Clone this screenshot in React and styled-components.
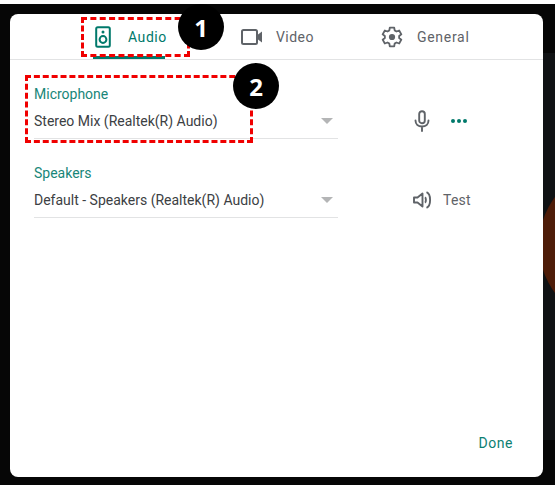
import React from "react";
import styled, { createGlobalStyle } from "styled-components";

const Global = createGlobalStyle`
  html, body { margin: 0; padding: 0; background: #fff; }
  body { font-family: Roboto, "Liberation Sans", sans-serif; }
`;

const Page = styled.div`
  position: relative;
  width: 555px;
  height: 481px;
  margin-top: 4px;
  background: #060606;
  overflow: hidden;
  padding: 10px 12px 8px 10px;
  box-sizing: border-box;
`;

const Backdrop = styled.div`
  position: absolute;
  left: 540px;
  top: 49px;
  width: 15px;
  height: 387px;
  background: #101214;
`;

const Glow = styled.div`
  position: absolute;
  left: 539px;
  top: 161px;
  width: 160px;
  height: 160px;
  border-radius: 50%;
  background: #4e1c08;
`;

const Dialog = styled.div`
  position: relative;
  width: 533px;
  height: 463px;
  background: #fff;
  border-radius: 8px;
  display: flex;
  flex-direction: column;
`;

const Tabs = styled.div`
  display: flex;
  height: 45px;
  border-bottom: 1px solid #e2e3e4;
  padding-left: 83px;
  box-sizing: content-box;
`;

const Tab = styled.div`
  display: flex;
  align-items: center;
  width: ${(p) => p.$width}px;
  height: 45px;
  box-sizing: border-box;
  padding-left: ${(p) => p.$pad}px;
  padding-top: ${(p) => (p.$active ? 3 : 0)}px;
  margin-right: ${(p) => p.$gap}px;
  font-size: 14px;
  letter-spacing: ${(p) => p.$spacing}px;
  font-weight: 400;
  color: ${(p) => (p.$active ? "#00796b" : "#5f6368")};
  border-bottom: ${(p) => (p.$active ? "3px solid #00796b" : "0")};
  svg { flex: none; margin-right: ${(p) => p.$iconGap}px; }
`;

const Content = styled.div`
  flex: 1;
  padding: 0 0 0 24px;
  display: flex;
  flex-direction: column;
`;

const Group = styled.div`
  display: flex;
  align-items: flex-start;
  margin-top: ${(p) => p.$top}px;
`;

const Field = styled.div`
  width: 304px;
  height: 52px;
  border-bottom: 1px solid #e2e3e4;
  display: flex;
  flex-direction: column;
  position: relative;
`;

const Label = styled.div`
  font-size: 14px;
  line-height: 16px;
  color: #00796b;
  opacity: 0.9;
`;

const Value = styled.div`
  font-size: 14px;
  line-height: 16px;
  margin-top: 11px;
  color: #3c4043;
`;

const Caret = styled.div`
  position: absolute;
  right: 5px;
  top: 32px;
  border-left: 6px solid transparent;
  border-right: 6px solid transparent;
  border-top: 6px solid #b4b5b6;
`;

const Actions = styled.div`
  display: flex;
  align-items: center;
  height: 16px;
  margin-top: 27px;
  padding-left: ${(p) => p.$left}px;
  font-size: 14px;
  letter-spacing: 0.25px;
  color: #5f6368;
`;

const ActionGap = styled.span`
  width: ${(p) => p.$w}px;
`;

const Footer = styled.div`
  display: flex;
  justify-content: flex-end;
  padding: 0 30px 26px 0;
  font-size: 14px;
  font-weight: 400;
  letter-spacing: 0.55px;
  color: #00796b;
  opacity: 0.95;
`;

const DashBox = styled.div`
  position: absolute;
  left: ${(p) => p.$x}px;
  top: ${(p) => p.$y}px;
  width: ${(p) => p.$w}px;
  height: ${(p) => p.$h}px;
  box-sizing: border-box;
  border: 3px dashed #f00000;
`;

const Badge = styled.div`
  position: absolute;
  left: ${(p) => p.$x}px;
  top: ${(p) => p.$y}px;
  width: 46px;
  height: 46px;
  border-radius: 50%;
  background: #000;
  color: #fff;
  display: flex;
  align-items: center;
  justify-content: center;
  font-family: "Open Sans", "Liberation Sans", sans-serif;
  font-weight: 700;
  font-size: 24px;
`;

const SpeakerIcon = () => (
  <svg width="16" height="22" viewBox="0 0 16 22" fill="none" stroke="#00796b" strokeWidth="2">
    <rect x="1.2" y="1.2" width="13.6" height="19.6" rx="1.5" />
    <circle cx="8" cy="13.5" r="3.4" />
    <circle cx="8" cy="6" r="1.5" fill="#00796b" stroke="none" />
  </svg>
);

const VideoIcon = () => (
  <svg width="22" height="16" viewBox="0 0 22 16" fill="none" stroke="#5f6368" strokeWidth="2">
    <rect x="1" y="1" width="15" height="14" rx="1.5" />
    <path d="M16 6.2 21 2.6v10.8L16 9.8z" fill="#5f6368" stroke="none" />
  </svg>
);

const GearIcon = () => (
  <svg width="22" height="22" viewBox="0 0 24 24" fill="none" stroke="#5f6368" strokeWidth="2" strokeLinejoin="round">
    <path d="M9.6 1.8h4.8l.5 3 2 1.2 2.9-1.1 2.400 4.200-2.400 1.900v2l2.400 1.900-2.400 4.200-2.900-1.100-2 1.200-.5 3H9.600l-.5-3-2-1.200-2.900 1.100-2.400-4.200L4.200 13v-2L1.800 9.100l2.400-4.200 2.900 1.100 2-1.200z" />
    <circle cx="12" cy="12" r="3.4" fill="#5f6368" stroke="none" />
  </svg>
);

const MicIcon = () => (
  <svg width="16" height="22" viewBox="0 0 16 22" fill="none" stroke="#5f6368" strokeWidth="1.9" strokeLinecap="round">
    <rect x="5.2" y="1.2" width="5.6" height="12" rx="2.8" />
    <path d="M1.500 10.500c0 3.800 2.800 6 6.500 6s6.500-2.200 6.500-6M8 16.500V21" />
  </svg>
);

const DotsIcon = () => (
  <svg width="16" height="4" viewBox="0 0 16 4" fill="#00796b">
    <circle cx="2" cy="2" r="2" />
    <circle cx="8" cy="2" r="2" />
    <circle cx="14" cy="2" r="2" />
  </svg>
);

const VolumeIcon = () => (
  <svg width="19" height="18" viewBox="0 0 19 18" fill="none" stroke="#5f6368" strokeWidth="1.9">
    <path d="M1 6.500h3.500L9.500 2.500v13l-5-4H1z" strokeLinejoin="round" />
    <path d="M12 6.200c1.200.8 1.200 4.800 0 5.600" />
    <path d="M13.500 1.200c4.800 2 4.800 13.600 0 15.600" />
  </svg>
);

export default function App() {
  return (
    <>
      <Global />
      <Page>
        <Backdrop />
        <Glow />
        <Dialog>
          <Tabs>
            <Tab $active $width={72} $pad={2} $gap={76} $iconGap={17} $spacing={0.55}>
              <SpeakerIcon />
              Audio
            </Tab>
            <Tab $width={120} $pad={0} $gap={20} $iconGap={13} $spacing={0.45}>
              <VideoIcon />
              Video
            </Tab>
            <Tab $width={100} $pad={0} $gap={0} $iconGap={14} $spacing={0.7}>
              <GearIcon />
              General
            </Tab>
          </Tabs>
          <Content>
            <Group $top={26}>
              <Field>
                <Label>Microphone</Label>
                <Value>Stereo Mix (Realtek(R) Audio)</Value>
                <Caret />
              </Field>
              <Actions $left={76}>
                <MicIcon />
                <ActionGap $w={21} />
                <DotsIcon />
              </Actions>
            </Group>
            <Group $top={26}>
              <Field>
                <Label>Speakers</Label>
                <Value>Default - Speakers (Realtek(R) Audio)</Value>
                <Caret />
              </Field>
              <Actions $left={75}>
                <VolumeIcon />
                <ActionGap $w={11} />
                Test
              </Actions>
            </Group>
          </Content>
          <Footer>Done</Footer>
        </Dialog>
        <DashBox $x={81} $y={13} $w={109} $h={40} />
        <DashBox $x={25} $y={71} $w={228} $h={68} />
        <Badge $x={178} $y={0}>1</Badge>
        <Badge $x={233} $y={59}>2</Badge>
      </Page>
    </>
  );
}
